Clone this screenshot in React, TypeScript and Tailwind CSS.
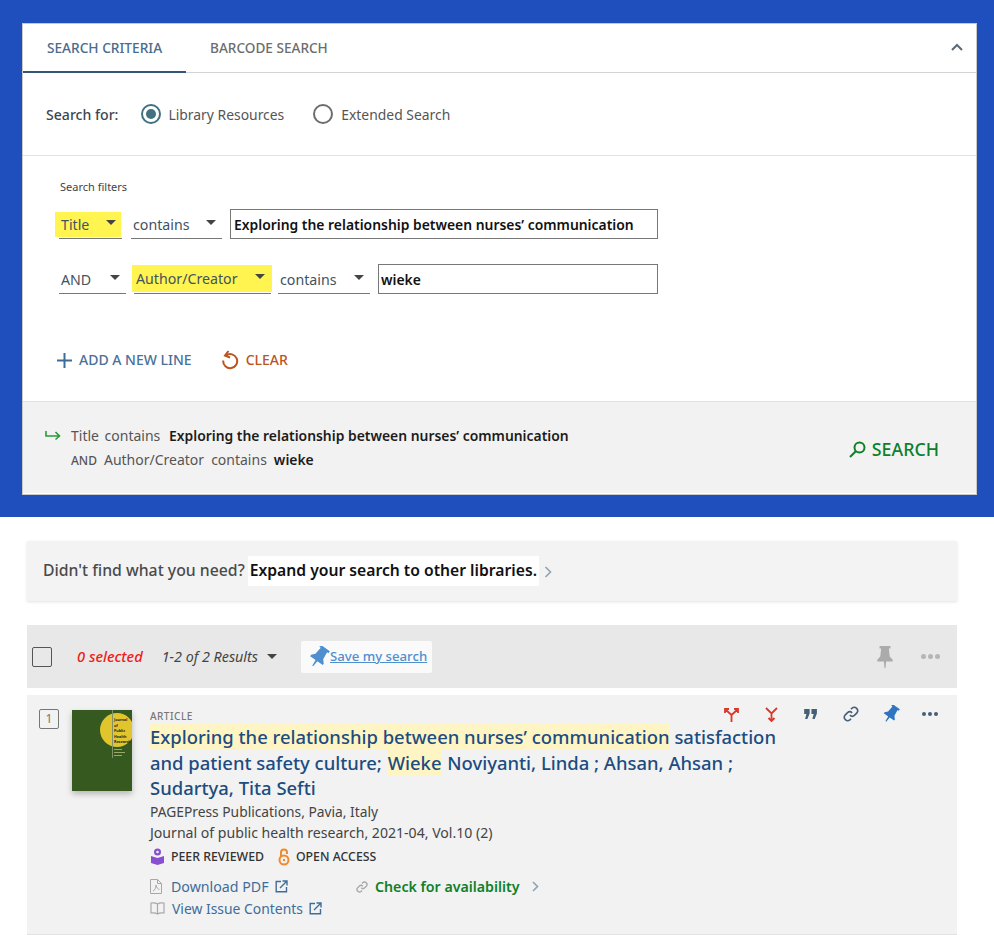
import React from "react";

const ff = "font-['Noto_Sans','Open_Sans',sans-serif]";

function Caret({ className = "" }: { className?: string }) {
  return (
    <svg width="10" height="5" viewBox="0 0 10 5" className={className}>
      <path d="M0 0h10L5 5z" fill="currentColor" />
    </svg>
  );
}

function Pin({ size = 20, color = "#2f74c0", angle = 35 }: { size?: number; color?: string; angle?: number }) {
  return (
    <svg width={size} height={size} viewBox="0 0 20 20">
      <path
        transform={`rotate(${angle} 10 10)`}
        d="M5 0h10v2.200h-1.500l.8 7.300L17 12.500V14h-6l-.5 6h-1L9 14H3v-1.500l2.700-3 .8-7.300H5z"
        fill={color}
      />
    </svg>
  );
}

function LinkIcon({ size, color, sw }: { size: number; color: string; sw: number }) {
  return (
    <svg width={size} height={size} viewBox="0 0 14 14" fill="none" stroke={color} strokeWidth={sw}>
      <path d="M6 8a3 3 0 0 0 4.200 0l2-2a3 3 0 0 0-4.200-4.200L7 2.800M8 6a3 3 0 0 0-4.200 0l-2 2A3 3 0 0 0 6 12.200l1-1" />
    </svg>
  );
}

function External() {
  return (
    <svg width="13" height="13" viewBox="0 0 13 13" fill="none" stroke="#3f6d9a" strokeWidth="1.4">
      <path d="M6 1.500H1.200v10.300h10.300V7" />
      <path d="M5 8l6.500-6.500M7.500 1h4.500v4.500" />
    </svg>
  );
}

function Select({ label, w }: { label: string; w: string }) {
  return (
    <div className={`flex h-[30px] items-center justify-between border-b border-[#777] pl-[2px] pr-[6px] pt-[2px] ${w}`}>
      <span className="text-[14.2px] text-[#43525f]">{label}</span>
      <Caret className="mb-1 text-[#444]" />
    </div>
  );
}

function Dots({ color, size }: { color: string; size: string }) {
  return (
    <div className="flex gap-[2px]">
      <div className={`rounded-full ${size} ${color}`} />
      <div className={`rounded-full ${size} ${color}`} />
      <div className={`rounded-full ${size} ${color}`} />
    </div>
  );
}

export default function App() {
  return (
    <div className={`h-[935px] w-[994px] overflow-hidden bg-white ${ff}`}>
      <div className="bg-[#1f4fbd] pb-[22px] pl-[22px] pr-[17px] pt-[23px]">
        <div className="h-[472px] border border-[#c9c9c9] bg-white">
          <div className="flex h-[49px] border-b border-[#d4d4d4]">
            <div className="-mb-px flex w-[163px] items-center justify-center border-b-2 border-[#33557a] pt-[1px] text-[13.7px] font-medium text-[#4a6c8c]">SEARCH CRITERIA</div>
            <div className="ml-[24px] flex items-center pt-[1px] text-[13.6px] font-medium text-[#6d6d6d]">BARCODE SEARCH</div>
            <svg width="12" height="8" viewBox="0 0 12 8" fill="none" stroke="#5a6a75" strokeWidth="2" className="ml-auto mr-[13px] mt-[19px]"><path d="M1 7l5-5 5 5" /></svg>
          </div>
          <div className="flex h-[83px] items-center border-b border-[#e2e2e2] pl-[23px]">
            <span className="mt-[1px] text-[14.1px] font-medium text-[#3c4650]">Search for:</span>
            <div className="ml-[23px] flex h-[20px] w-[20px] items-center justify-center rounded-full border-2 border-[#40727f]">
              <div className="h-[10px] w-[10px] rounded-full bg-[#40727f]" />
            </div>
            <span className="ml-[7px] mt-[2px] text-[13.9px] text-[#555]">Library Resources</span>
            <div className="ml-[29px] h-[20px] w-[20px] rounded-full border-2 border-[#6d6d6d]" />
            <span className="ml-[8px] mt-[2px] text-[13.9px] text-[#555]">Extended Search</span>
          </div>
          <div className="h-[245px] pl-[36px] pt-[23px]">
            <div className="pl-[1px] text-[11px] leading-[15px] text-[#444]">Search filters</div>
            <div className="mt-[15px] flex">
              <div className="relative h-[30px] w-[63px] border-b border-[#777]">
                <div className="absolute -left-[4px] top-[3px] flex h-[25px] w-[66px] items-center justify-between bg-[#fff450] pl-[6px] pr-[5px]">
                  <span className="text-[14.2px] text-[#43525f]">Title</span>
                  <Caret className="mb-1 text-[#444]" />
                </div>
              </div>
              <div className="ml-[9px]"><Select label="contains" w="w-[91px]" /></div>
              <div className="ml-[8px] flex h-[30px] w-[428px] items-center border border-[#777] pl-[3px] pt-[2px] text-[13.9px] font-semibold text-[#111]">Exploring the relationship between nurses’ communication</div>
            </div>
            <div className="mt-[25px] flex">
              <Select label="AND" w="w-[67px]" />
              <div className="relative ml-[8px] h-[30px] w-[137px] border-b border-[#777]">
                <div className="absolute -left-[2px] top-[1px] flex h-[27px] w-[140px] items-center justify-between bg-[#fff450] pl-[4px] pr-[7px]">
                  <span className="text-[14.2px] text-[#43525f]">Author/Creator</span>
                  <Caret className="mb-1 text-[#444]" />
                </div>
              </div>
              <div className="ml-[7px]"><Select label="contains" w="w-[92px]" /></div>
              <div className="ml-[8px] flex h-[30px] w-[280px] items-center border border-[#777] pl-[2px] pt-[2px] text-[13.9px] font-semibold text-[#111]">wieke</div>
            </div>
            <div className="mt-[56px] flex h-[20px] items-center">
              <svg width="15" height="15" viewBox="0 0 15 15" stroke="#3f6d9a" strokeWidth="2" className="-ml-[2px]"><path d="M7.500 0v15M0 7.500h15" /></svg>
              <span className="mb-[1px] ml-[7px] text-[14px] font-medium text-[#4a7199]">ADD A NEW LINE</span>
              <svg width="18" height="20" viewBox="0 0 18 20" fill="none" stroke="#b9551f" strokeWidth="2" className="ml-[29px]">
                <path d="M5 5.500a7 7 0 1 1-2.800 5" />
                <path d="M7.500 1L4 5.500l5 2" />
              </svg>
              <span className="mb-[1px] ml-[7px] text-[14px] font-medium text-[#b9551f]">CLEAR</span>
            </div>
          </div>
          <div className="flex h-[92px] items-center justify-between border-t border-[#e2e2e2] bg-[#f2f2f2] pl-[22px] pr-[37px]">
            <div className="flex">
              <svg width="16" height="11" viewBox="0 0 16 11" fill="none" stroke="#2a9a3a" strokeWidth="1.600" className="mr-[10px] mt-[8px]">
                <path d="M1 1v5h13M10.500 2L14.500 6l-4 3.500" />
              </svg>
              <div className="pt-[2px] text-[14px] leading-[24px] text-[#555]">
                <div>Title <span className="ml-[2px]">contains</span> <span className="ml-[5px] text-[13.9px] font-semibold text-[#1c1c1c]">Exploring the relationship between nurses’ communication</span></div>
                <div className="flex items-baseline">
                  <span className="text-[12px] font-medium">AND</span>
                  <span className="ml-[7px]">Author/Creator</span>
                  <span className="ml-[7px]">contains</span>
                  <span className="ml-[7px] text-[13.9px] font-semibold text-[#1c1c1c]">wieke</span>
                </div>
              </div>
            </div>
            <div className="mt-[4px] flex items-center gap-[6px]">
              <svg width="17" height="17" viewBox="0 0 17 17" fill="none" stroke="#0d8028" strokeWidth="2"><circle cx="10.500" cy="6.500" r="5" /><path d="M6.800 10.200L1 16" /></svg>
              <span className="text-[17.800px] font-medium text-[#0d8028]">SEARCH</span>
            </div>
          </div>
        </div>
      </div>

      <div className="px-[27px] pt-[24px]">
        <div className="flex h-[60px] w-[930px] items-center bg-[#f3f3f3] pl-[16px] shadow-[0_1px_3px_rgba(0,0,0,0.12)]">
          <span className="text-[15.8px] font-medium text-[#4a4a4a]">Didn't find what you need?</span>
          <span className="ml-[3px] bg-white px-[2px] py-[3px] text-[15.7px] font-semibold text-[#111]">Expand your search to other libraries.</span>
          <svg width="8" height="12" viewBox="0 0 8 12" fill="none" stroke="#8fa3b5" strokeWidth="1.600" className="ml-[5px] mt-[2px]"><path d="M1.500 1l5 5-5 5" /></svg>
        </div>

        <div className="mt-[24px] flex h-[63px] w-[930px] items-center bg-[#e8e8e8] pl-[5px] pr-[17px]">
          <div className="h-[20px] w-[20px] rounded-[2px] border border-[#555]" />
          <span className="ml-[25px] text-[14.700px] font-medium italic text-[#ee1c1c]">0 selected</span>
          <span className="ml-[19px] text-[14.300px] italic text-[#444]">1-2 of 2 Results</span>
          <Caret className="ml-[9px] text-[#444]" />
          <div className="ml-[24px] flex h-[32px] w-[131px] items-center rounded-[2px] bg-[#fafafa] pl-[7px]">
            <Pin size={22} color="#4f8fd0" />
            <span className="text-[13.200px] font-medium text-[#4f8fd0] underline">Save my search</span>
          </div>
          <div className="ml-auto mr-[25px]"><Pin size={22} color="#ababab" angle={0} /></div>
          <Dots color="bg-[#b5b5b5]" size="h-[5px] w-[5px]" />
        </div>

        <div className="relative mt-[7px] flex h-[240px] w-[930px] border-b border-[#e2e2e2] bg-[#f2f2f2]">
          <div className="ml-[12px] mt-[14px] flex h-[20px] w-[20px] items-center justify-center rounded-[2px] border border-[#777] text-[12px] text-[#777]">1</div>
          <div className="relative ml-[13px] mt-[15px] h-[81px] w-[60px] overflow-hidden bg-[#35591f] shadow-[0_3px_6px_rgba(0,0,0,0.25)]">
            <div className="absolute left-[28px] top-[3px] h-[34px] w-[34px] rounded-full bg-[#e0c52c]" />
            <div className="absolute left-[40px] top-0 h-[48px] w-px bg-[#7e9468]" />
            <div className="absolute left-[42px] top-[7px] text-[3.700px] font-bold leading-[5.500px] text-[#222]">
              <div>Journal</div><div>of</div><div>Public</div><div>Health</div><div>Research</div>
            </div>
            <div className="absolute left-[42px] top-[39px] h-px w-[8px] bg-[#9aa86a]" />
            <div className="absolute left-[42px] top-[42px] h-px w-[11px] bg-[#9aa86a]" />
            <div className="absolute left-[42px] top-[45px] h-px w-[8px] bg-[#9aa86a]" />
          </div>
          <div className="ml-[18px] mt-[15px] w-[640px]">
            <div className="text-[10px] font-medium leading-[13px] tracking-[0.5px] text-[#777]">ARTICLE</div>
            <div className="mt-[1px] text-[18.450px] font-medium leading-[25.500px] text-[#1c4c80]">
              <span className="bg-[#fff5c4]">Exploring the relationship between nurses’ communication</span> satisfaction and patient safety culture; <span className="bg-[#fff5c4] px-[1px]">Wieke</span> Noviyanti, Linda ; Ahsan, Ahsan ; Sudartya, Tita Sefti
            </div>
            <div className="text-[13.800px] leading-[21px] text-[#444]">PAGEPress Publications, Pavia, Italy</div>
            <div className="text-[14.100px] leading-[21px] text-[#444]">Journal of public health research, 2021-04, Vol.10 (2)</div>
            <div className="mt-[5px] flex items-center text-[12.300px] font-medium text-[#333]">
              <svg width="15" height="17" viewBox="0 0 15 17" fill="#8a4fd0">
                <circle cx="7.500" cy="4" r="3.500" /><circle cx="7.500" cy="4" r="1.300" fill="#f2f2f2" />
                <path d="M1 8l6.500 2L14 8v7l-6.500 2L1 15z" />
              </svg>
              <span className="ml-[6px]">PEER REVIEWED</span>
              <svg width="12" height="18" viewBox="0 0 12 18" fill="none" stroke="#f08a2c" strokeWidth="2" className="ml-[14px]">
                <path d="M3 8V4.500a3 3 0 0 1 6 0V6" /><circle cx="6" cy="12" r="4.500" /><circle cx="6" cy="12" r="1.200" fill="#f08a2c" stroke="none" />
              </svg>
              <span className="ml-[6px]">OPEN ACCESS</span>
            </div>
            <div className="mt-[10px] flex">
              <div className="w-[206px] text-[14px] leading-[22px] text-[#3f6d9a]">
                <div className="flex items-center">
                  <svg width="12" height="15" viewBox="0 0 12 15" fill="none" stroke="#a8a8a8"><path d="M.5.500h7l4 4v10H.5zM7.500.500v4h4M3 12c2-1 3-3 3-6 .5 3 2 4 3.500 4.500" /></svg>
                  <span className="ml-[9px] text-[14.200px]">Download PDF</span>
                  <span className="ml-[6px]"><External /></span>
                </div>
                <div className="flex items-center">
                  <svg width="15" height="13" viewBox="0 0 15 13" fill="none" stroke="#a8a8a8" strokeWidth="1.200"><path d="M7.500 2C6 1 3 .7 1 1v10c2-.3 5 0 6.500 1 1.500-1 4.500-1.300 6.500-1V1c-2-.3-5 0-6.500 1zM7.500 2v10" /></svg>
                  <span className="ml-[7px] text-[13.900px]">View Issue Contents</span>
                  <span className="ml-[6px]"><External /></span>
                </div>
              </div>
              <div className="flex h-[22px] items-center">
                <LinkIcon size={12} color="#a8a8a8" sw={1.600} />
                <span className="ml-[7px] text-[14.200px] font-semibold text-[#0d8028]">Check for availability</span>
                <svg width="7" height="11" viewBox="0 0 7 11" fill="none" stroke="#8fa3b5" strokeWidth="1.600" className="ml-[12px]"><path d="M1 1l4.500 4.500L1 10" /></svg>
              </div>
            </div>
          </div>
          <div className="absolute left-[684px] top-[11px] flex h-[16px] items-center">
            <div className="flex w-[40px] justify-center">
              <svg width="15" height="15" viewBox="0 0 15 15" fill="none" stroke="#d8392b" strokeWidth="1.800"><path d="M7.500 15V8L2 3M7.500 8L13 3M1 6V2h4M14 6V2h-4" /></svg>
            </div>
            <div className="flex w-[40px] justify-center">
              <svg width="13" height="15" viewBox="0 0 13 15" fill="none" stroke="#d8392b" strokeWidth="1.800"><path d="M1 1l5.500 5.500L12 1M6.500 6.500V14M3.500 11l3 3 3-3" /></svg>
            </div>
            <div className="flex w-[40px] justify-center">
              <svg width="14" height="10" viewBox="0 0 15 11" fill="#445f78"><path d="M0 0h6v5l-2.500 6H1l1.500-5.500H0zM8 0h6v5l-2.500 6H9l1.500-5.500H8z" /></svg>
            </div>
            <div className="flex w-[40px] justify-center"><LinkIcon size={16} color="#445f78" sw={1.400} /></div>
            <div className="flex w-[40px] justify-center"><Pin size={18} /></div>
            <div className="flex w-[38px] justify-center"><Dots color="bg-[#445f78]" size="h-[4px] w-[4px]" /></div>
          </div>
        </div>
      </div>
    </div>
  );
}
